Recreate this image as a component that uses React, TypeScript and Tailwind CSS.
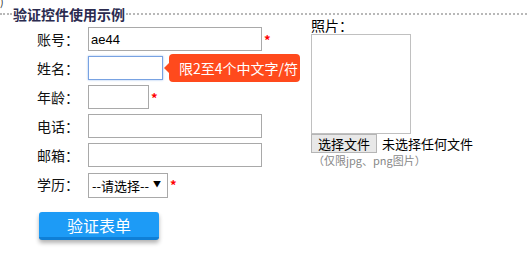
import { useState } from 'react'

const cjk = '"Noto Sans CJK SC", "Liberation Sans", sans-serif'

function Star() {
  return <span className="ml-[2px] text-[13px] leading-none font-bold text-[#f00] mt-[1px]">*</span>
}

function Row({ label, children }: { label: string; children: React.ReactNode }) {
  return (
    <div className="flex items-center h-[24px] mb-[5px]">
      <span className="w-[51px] text-[14px] leading-[16px] text-[#111]">{label}</span>
      {children}
    </div>
  )
}

export default function App() {
  const [account, setAccount] = useState('ae44')
  const input = 'h-[24px] border border-[#a9a9a9] bg-white px-[2px] text-[13px] text-black outline-none'

  return (
    <div className="relative w-[527px] h-[265px] bg-white overflow-hidden" style={{ fontFamily: cjk }}>
      <span className="absolute left-0 -top-[6px] text-[11px] leading-[14px] text-[#333]">)</span>

      <div className="flex items-center h-[16px] mt-[6px]">
        <div className="w-[12px] border-t-2 border-dotted border-[#b8b8b8]" />
        <span className="px-[1px] text-[14px] leading-[16px] font-bold text-[#2b2b4f]">验证控件使用示例</span>
        <div className="flex-1 border-t-2 border-dotted border-[#b8b8b8]" />
      </div>

      <div className="flex">
        <div className="w-[311px] pl-[37px] pt-[5px]">
          <Row label="账号：">
            <input
              value={account}
              onChange={e => setAccount(e.target.value)}
              className={`${input} w-[174px]`}
              style={{ fontFamily: '"Liberation Sans", Arial, sans-serif' }}
            />
            <Star />
          </Row>
          <Row label="姓名：">
            <input className="h-[24px] w-[75px] border border-[#78a2e2] bg-white outline-none shadow-[0_0_2px_#9cbdf0]" />
            <div className="flex items-center ml-[1px]">
              <div className="w-0 h-0 border-y-[5px] border-y-transparent border-r-[5px] border-r-[#ff4a1d]" />
              <div className="h-[28px] w-[131px] rounded-[4px] bg-[#ff4a1d] pl-[10px] flex items-center text-[14px] text-white whitespace-nowrap">
                限2至4个中文字/符
              </div>
            </div>
          </Row>
          <Row label="年龄：">
            <input className={`${input} w-[61px]`} />
            <Star />
          </Row>
          <Row label="电话：">
            <input className={`${input} w-[174px]`} />
          </Row>
          <Row label="邮箱：">
            <input className={`${input} w-[174px]`} />
          </Row>
          <Row label="学历：">
            <div className="relative h-[25px] w-[80px]">
              <select className="appearance-none h-[25px] w-[80px] border border-[#a9a9a9] bg-white pl-[3px] text-[13px] text-black outline-none">
                <option>--请选择--</option>
                <option>本科</option>
                <option>硕士</option>
              </select>
              <span className="absolute right-[7px] top-[7px] text-[8px] leading-[10px] text-black pointer-events-none">▼</span>
            </div>
            <Star />
          </Row>

          <button className="mt-[11px] ml-[2px] h-[28px] w-[120px] rounded-[3px] bg-[#1d9bf6] border-b-[3px] border-[#0f7fd6] text-[16px] text-white shadow-[0_3px_4px_rgba(0,0,0,0.3)]">
            验证表单
          </button>
        </div>

        <div className="-mt-[6px] flex flex-col items-start">
          <span className="text-[14px] leading-[18px] text-black">照片：</span>
          <div className="w-[100px] h-[100px] border border-[#c0c0c0] bg-white" />
          <div className="flex items-center">
            <button className="h-[19px] px-[6px] border border-[#b5b5b5] bg-[#e8e8e8] text-[13px] leading-[15px] text-black">选择文件</button>
            <span className="ml-[5px] text-[13px] leading-[15px] text-black">未选择任何文件</span>
          </div>
          <span className="ml-[2px] text-[11px] leading-[14px] text-[#888]">（仅限jpg、png图片）</span>
        </div>
      </div>
    </div>
  )
}
